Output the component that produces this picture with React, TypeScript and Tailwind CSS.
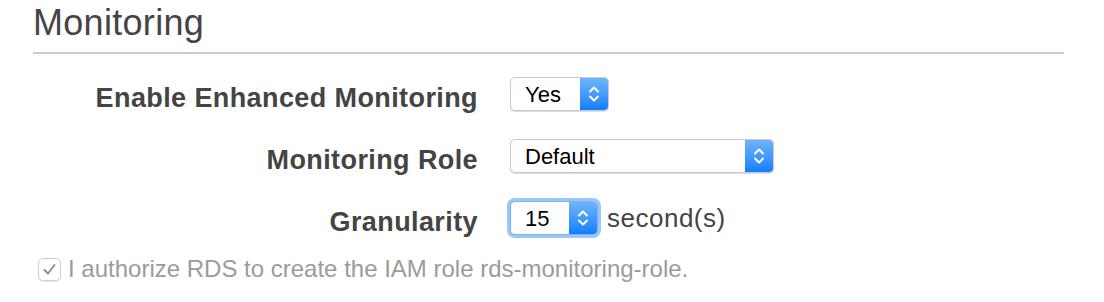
import React from "react";

const font = { fontFamily: '"Liberation Sans", Arial, sans-serif' };

function Chevrons() {
  return (
    <svg width="12" height="20" viewBox="0 0 12 20" fill="none" stroke="white" strokeWidth="2" strokeLinecap="round" strokeLinejoin="round">
      <path d="M2 7.5 L6 3.5 L10 7.5" />
      <path d="M2 12.5 L6 16.5 L10 12.5" />
    </svg>
  );
}

function Select({ value, className, focused }: { value: string; className: string; focused?: boolean }) {
  return (
    <div
      className={`flex h-[34px] shrink-0 overflow-hidden rounded-[5px] border bg-white ${
        focused
          ? "border-[#7fb2ee] shadow-[0_0_0_3px_#9cc6f7]"
          : "border-[#cacaca] shadow-[0_1px_1px_rgba(0,0,0,0.15)]"
      } ${className}`}
    >
      <span className="flex-1 pl-[14px] text-[22px] leading-[33px] text-black">{value}</span>
      <span className="flex w-[28px] items-center justify-center bg-linear-to-b from-[#6db4fb] to-[#0b7ffe]">
        <Chevrons />
      </span>
    </div>
  );
}

export default function App() {
  const rows: { label: string; control: React.ReactNode }[] = [
    { label: "Enable Enhanced Monitoring", control: <Select value="Yes" className="w-[99px]" /> },
    { label: "Monitoring Role", control: <Select value="Default" className="w-[264px]" /> },
    {
      label: "Granularity",
      control: (
        <div className="flex items-center gap-[9px]">
          <Select value="15" className="w-[88px]" focused />
          <span className="text-[26px] leading-[34px] tracking-[0.5px] text-[#444]">second(s)</span>
        </div>
      ),
    },
  ];

  return (
    <div className="h-[302px] w-[1104px] bg-white pl-[33px] pt-[5px]" style={font}>
      <h2 className="text-[36px] font-normal leading-[36px] tracking-[0.3px] text-[#444]">Monitoring</h2>
      <div className="mt-[11px] h-[2px] w-[1031px] bg-[#cbcbcb]" />

      <div className="mt-[23px] flex flex-col gap-[28px]">
        {rows.map((r) => (
          <div key={r.label} className="flex h-[34px] items-start">
            <div className="w-[445px] pt-[8px] text-right text-[27px] font-bold leading-[26px] tracking-[0.4px] text-[#444]">
              {r.label}
            </div>
            <div className="ml-[32px]">{r.control}</div>
          </div>
        ))}
      </div>

      <label className="mt-[20px] flex items-center gap-[7px] pl-[5px]">
        <span className="flex h-[23px] w-[23px] items-center justify-center rounded-[5px] border border-[#cfcfcf] bg-white shadow-[0_1px_1px_rgba(0,0,0,0.08)]">
          <svg width="15" height="13" viewBox="0 0 15 13" fill="none" stroke="#8a8a8a" strokeWidth="1.8" strokeLinecap="round" strokeLinejoin="round">
            <path d="M2.5 7 L6 10.5 L12.5 2" />
          </svg>
        </span>
        <span className="text-[24px] leading-[28px] text-[#9b9b9b]">
          I authorize RDS to create the IAM role rds-monitoring-role.
        </span>
      </label>
    </div>
  );
}
